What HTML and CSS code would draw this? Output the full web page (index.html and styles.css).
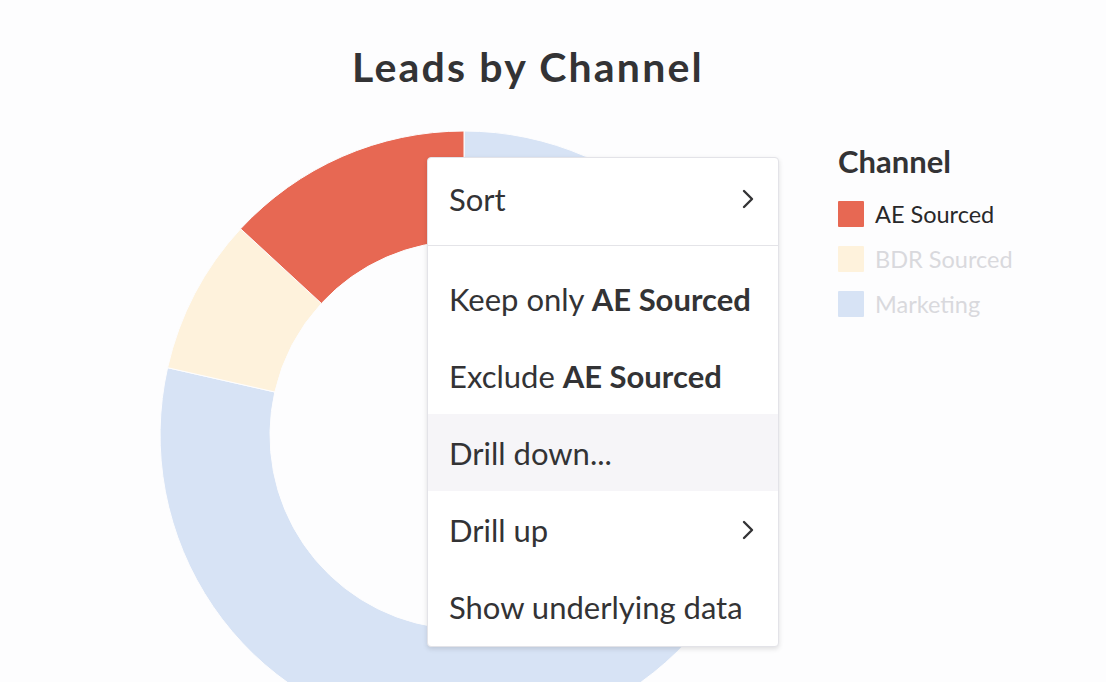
FILE: index.html
```html
<!DOCTYPE html>
<html lang="en">
<head>
    <meta charset="UTF-8">
    <meta name="viewport" content="width=device-width, initial-scale=1.0">
    <title>Leads by Channel</title>
    <link rel="stylesheet" href="styles.css">
</head>
<body>
    <div class="page">
        <h1 class="title">Leads by Channel</h1>
        <div class="chart-row">
            <svg class="donut" width="608" height="608" viewBox="0 0 608 608">
                <path class="slice marketing" d="M 304 0 A 304 304 0 1 1 7.6 236.7 L 114.8 261.0 A 194 194 0 1 0 304 110 Z"/>
                <path class="slice bdr" d="M 7.6 236.7 A 304 304 0 0 1 80.6 97.8 L 161.4 172.4 A 194 194 0 0 0 114.8 261.0 Z"/>
                <path class="slice ae" d="M 80.6 97.8 A 304 304 0 0 1 304 0 L 304 110 A 194 194 0 0 0 161.4 172.4 Z"/>
            </svg>
            <div class="legend">
                <p class="legend-title">Channel</p>
                <div class="legend-item">
                    <span class="swatch ae"></span>
                    <span>AE Sourced</span>
                </div>
                <div class="legend-item faded">
                    <span class="swatch bdr"></span>
                    <span>BDR Sourced</span>
                </div>
                <div class="legend-item faded">
                    <span class="swatch marketing"></span>
                    <span>Marketing</span>
                </div>
            </div>
        </div>

        <div class="menu">
            <div class="menu-item first">
                <span>Sort</span>
                <svg class="chev" width="12" height="20" viewBox="0 0 12 20"><path d="M2 2 L10 10 L2 18"/></svg>
            </div>
            <div class="divider"></div>
            <div class="menu-group">
                <div class="menu-item"><span>Keep only <b>AE Sourced</b></span></div>
                <div class="menu-item"><span>Exclude <b>AE Sourced</b></span></div>
                <div class="menu-item active"><span>Drill down...</span></div>
                <div class="menu-item">
                    <span>Drill up</span>
                    <svg class="chev" width="12" height="20" viewBox="0 0 12 20"><path d="M2 2 L10 10 L2 18"/></svg>
                </div>
                <div class="menu-item"><span>Show underlying data</span></div>
            </div>
        </div>
    </div>
</body>
</html>
```

FILE: styles.css
```css
* {
    margin: 0;
    padding: 0;
    box-sizing: border-box;
}

body {
    background-color: #fdfdfe;
    font-family: Lato, "Open Sans", sans-serif;
    color: #323234;
    overflow: hidden;
    height: 682px;
}

.page {
    position: relative;
    height: 682px;
    padding-top: 43px;
    overflow: hidden;
}

.title {
    font-size: 41px;
    font-weight: 700;
    line-height: 48px;
    height: 48px;
    letter-spacing: 2.2px;
    text-align: center;
    padding-right: 50px;
    color: #333335;
}

.chart-row {
    display: flex;
    margin-top: 40px;
    height: 551px;
    overflow: hidden;
}

.donut {
    margin-left: 160px;
    flex-shrink: 0;
}

.slice {
    stroke: #fdfdfe;
    stroke-width: 1;
}

.ae {
    fill: #e76853;
    background-color: #e76853;
}

.bdr {
    fill: #fef2dc;
    background-color: #fef2dc;
}

.marketing {
    fill: #d7e3f5;
    background-color: #d7e3f5;
}

.legend {
    margin-left: 70px;
    padding-top: 12px;
}

.legend-title {
    font-size: 31px;
    font-weight: 700;
    line-height: 36px;
    margin-bottom: 12px;
    color: #333335;
}

.legend-item {
    display: flex;
    align-items: center;
    gap: 11px;
    height: 45px;
    font-size: 23.5px;
    color: #28282a;
}

.legend-item.faded {
    color: #d9d9dd;
}

.swatch {
    width: 26px;
    height: 26px;
    border-radius: 1px;
}

.menu {
    position: absolute;
    left: 427px;
    top: 157px;
    width: 352px;
    height: 490px;
    background-color: #fff;
    border: 1px solid #e3e3e8;
    border-radius: 4px;
    box-shadow: 0 2px 5px rgba(0, 0, 0, 0.12);
    padding-top: 1px;
}

.menu-item {
    display: flex;
    align-items: center;
    justify-content: space-between;
    height: 77px;
    padding: 0 24px 0 21px;
    font-size: 31px;
    color: #333335;
}

.menu-item.first {
    height: 80px;
}

.menu-item b {
    font-weight: 700;
}

.menu-item.active {
    background-color: #f6f5f8;
}

.divider {
    height: 1px;
    background-color: #e4e4e8;
    margin: 6px 0 14px;
}

.chev path {
    fill: none;
    stroke: #333335;
    stroke-width: 2.4;
    stroke-linecap: round;
    stroke-linejoin: round;
}
```
